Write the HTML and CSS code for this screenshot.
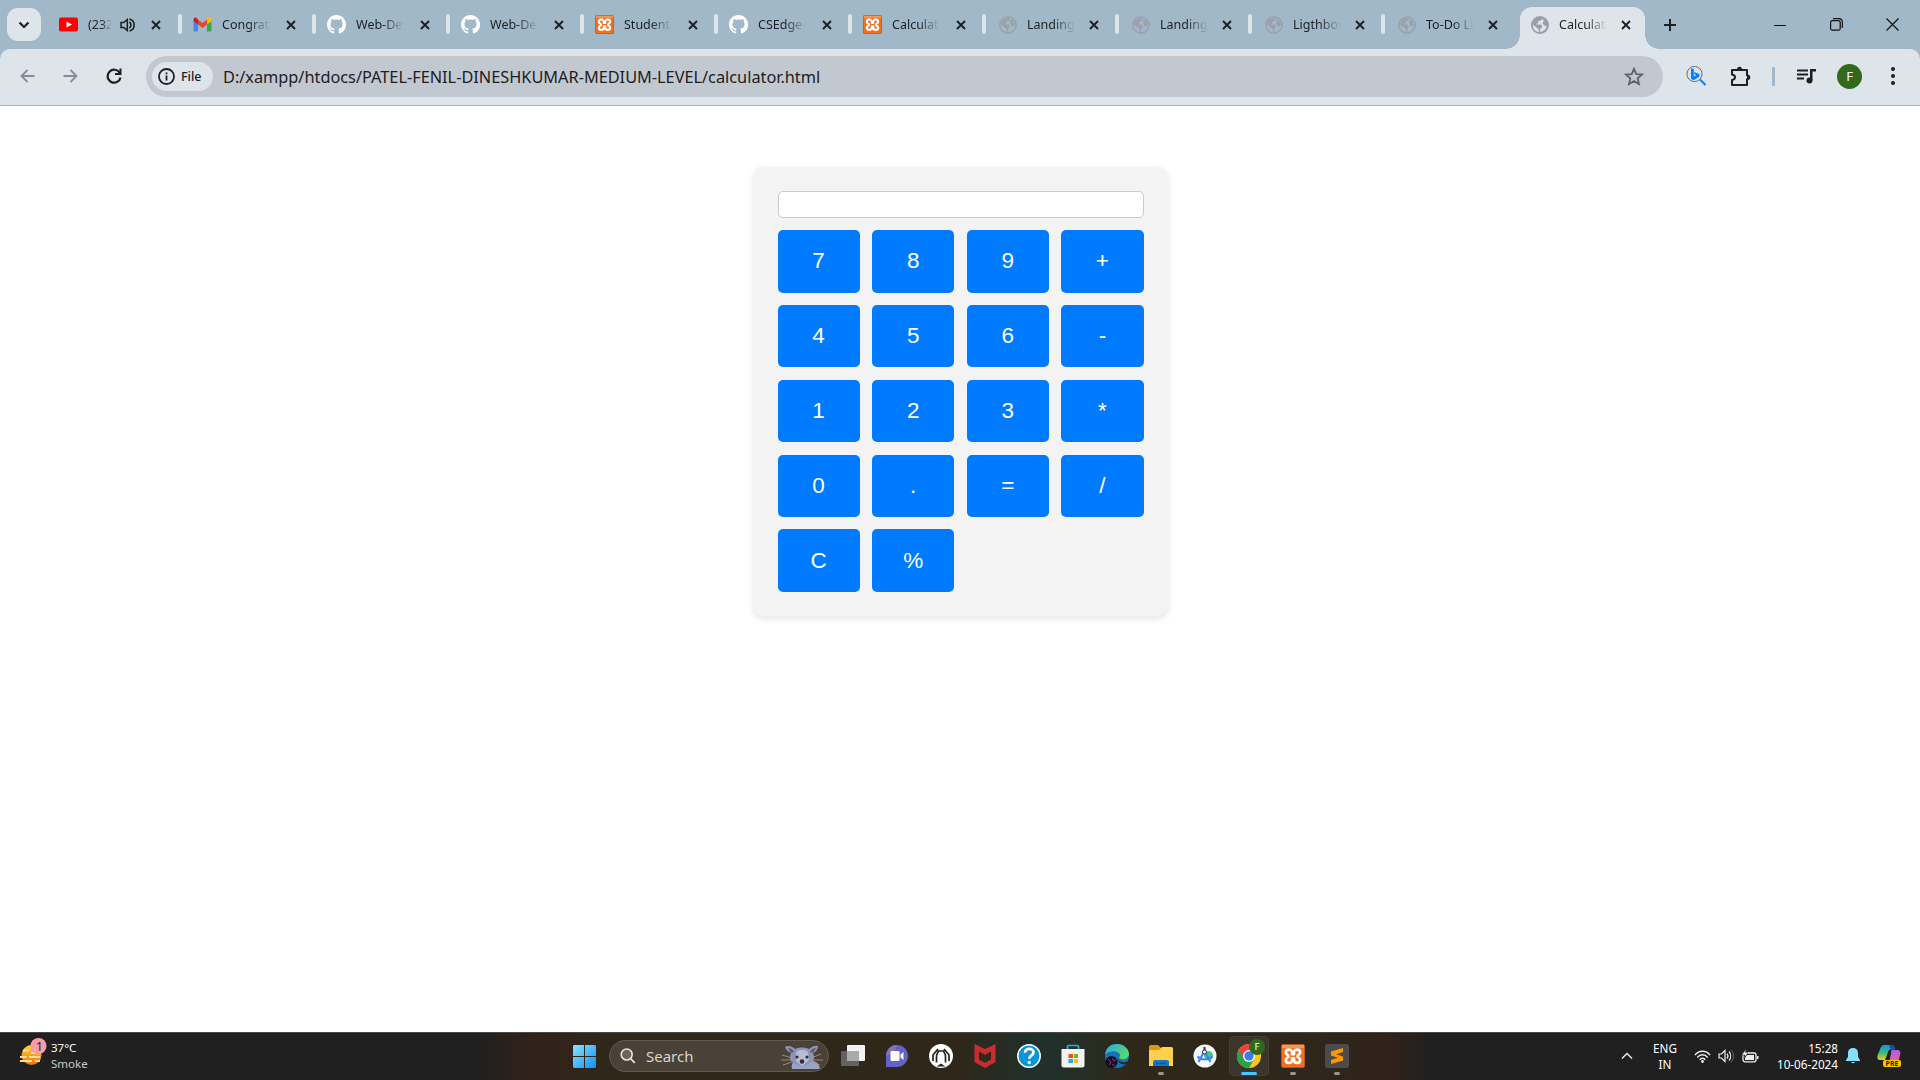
FILE: index.html
```html
<!DOCTYPE html>
<html lang="en">
<head>
<meta charset="utf-8">
<title>Calculator</title>
<link rel="stylesheet" href="styles.css">
</head>
<body>
<svg class="defs" aria-hidden="true">
  <defs>
    <symbol id="close" viewBox="0 0 10 10"><path d="M1 1 9 9M9 1 1 9" fill="none" stroke="#1c2023" stroke-width="1.9"/></symbol>
    <symbol id="github" viewBox="0 0 16 16"><path fill="#fff" d="M8 0C3.58 0 0 3.58 0 8c0 3.54 2.29 6.53 5.47 7.59.4.07.55-.17.55-.38 0-.19-.01-.82-.01-1.49-2.01.37-2.53-.49-2.69-.94-.09-.23-.48-.94-.82-1.13-.28-.15-.68-.52-.01-.53.63-.01 1.08.58 1.23.82.72 1.21 1.87.87 2.33.66.07-.52.28-.87.51-1.07-1.78-.2-3.64-.89-3.64-3.95 0-.87.31-1.59.82-2.15-.08-.2-.36-1.02.08-2.12 0 0 .67-.21 2.2.82.64-.18 1.32-.27 2-.27s1.36.09 2 .27c1.53-1.04 2.2-.82 2.2-.82.44 1.1.16 1.92.08 2.12.51.56.82 1.27.82 2.15 0 3.07-1.87 3.75-3.65 3.95.29.25.54.73.54 1.48 0 1.07-.01 1.93-.01 2.2 0 .21.15.46.55.38A8.01 8.01 0 0 0 16 8c0-4.42-3.58-8-8-8z"/></symbol>
    <symbol id="xampp" viewBox="0 0 24 24"><rect x=".5" y=".5" width="23" height="23" rx="1.5" fill="#f37021" stroke="#b5561c"/><path d="M1 1h22v3H1z" fill="#e39a66"/><path d="M11 8.500C11 4.500 4.800 4.800 4.800 8.500c0 2.200 2.700 2 2.700 3.700s-2.700 1.500-2.700 3.700c0 3.900 6.200 3.900 6.200 0v-1.700h2v1.700c0 3.900 6.200 3.900 6.200 0 0-2.200-2.700-2-2.700-3.700s2.700-1.500 2.700-3.700c0-3.700-6.200-4-6.200 0v1.700h-2z" fill="none" stroke="#fff" stroke-width="2.600" stroke-linejoin="round"/></symbol>
    <symbol id="globe" viewBox="0 0 18 18"><circle cx="9" cy="9" r="8.100" fill="none" stroke="#9b9fa8" stroke-width="1.500"/><path fill="#9b9fa8" d="M2.200 7.500C3 4.500 5.500 2.500 9 2.300l2 .4-1 2-2.800.5v2L5.200 8.500h4l1.800 1.700-1.700 2v3.300l-1.500.2v-2.500L5.500 11 2.300 8.800zM12.200 3.500c2 1 3.200 2.700 3.500 5l-1 1.700-2-.2-1.400-2.200.5-1.300-1-1.500z"/></symbol>
    <symbol id="globe-solid" viewBox="0 0 18 18"><circle cx="9" cy="9" r="9" fill="#9b9ea8"/><path d="M11.200 2.200c0 2.500-2 2.300-3.700 2.800-.8.700.2 1.800-.5 2.500H5c0 1.700 3.500.8 5 1.200 1.700.8 1.500 2.700 0 3.300-1.200.5-.5 2-1 3.900l-1-.1c-.3-1.700 0-2.300-1.300-3.300L2 8.700c-.5 4 2.500 7.200 6 7.300 4 0 7.300-2.800 7.900-6.500-1 1-2 .8-2.700-.2-.7-1-1.500-1.300-1.500-2.300s1-1 1-2-.8-1.300-1.500-2.800z" fill="#dde5eb"/></symbol>
  </defs>
</svg>

<header class="browser">
  <div class="tabstrip">
    <button class="tab-search"><svg width="12" height="8" viewBox="0 0 12 8"><path d="m1.500 1.500 4.500 4.500 4.500-4.500" fill="none" stroke="#1c2023" stroke-width="2.200"/></svg></button>
    <nav class="tabs">
      <div class="tab"><svg class="fav" viewBox="0 0 19 19"><rect y="2.500" width="19" height="14" rx="2" fill="#f00"/><path d="m7.500 6.500 5.500 3-5.500 3z" fill="#fff"/></svg><span class="label short">(232)</span><svg class="audio" viewBox="0 0 15 14"><path d="M1 4.500h2.800L7.300 1.500v11L3.800 9.500H1z" fill="none" stroke="#1c2023" stroke-width="1.500"/><path d="M9.300 4a3.500 3.500 0 0 1 0 6M9.500 1a6.200 6.200 0 0 1 0 12" fill="none" stroke="#1c2023" stroke-width="1.600"/></svg><svg class="x"><use href="#close"/></svg></div>
      <div class="tab"><svg class="fav" viewBox="0 0 19 19"><path d="M.5 5v10.500c0 .6.400 1 1 1H5V9z" fill="#4285f4"/><path d="M18.500 5v10.500c0 .6-.4 1-1 1H14V9z" fill="#34a853"/><path d="M14 4.500V9.500l4.500-3.300V4.500c0-2-2-2.500-3.200-1.500z" fill="#fbbc04"/><path d="M5 4.500v5l4.500 3.400L14 9.500v-5L9.500 8z" fill="#ea4335"/><path d="M.5 4.500v1.700L5 9.500v-5L3.700 3C2.500 2 .5 2.800.5 4.500z" fill="#c5221f"/></svg><span class="label">Congratulations</span><svg class="x"><use href="#close"/></svg></div>
      <div class="tab"><svg class="fav"><use href="#github"/></svg><span class="label">Web-Development</span><svg class="x"><use href="#close"/></svg></div>
      <div class="tab"><svg class="fav"><use href="#github"/></svg><span class="label">Web-Development</span><svg class="x"><use href="#close"/></svg></div>
      <div class="tab"><svg class="fav"><use href="#xampp"/></svg><span class="label">Student</span><svg class="x"><use href="#close"/></svg></div>
      <div class="tab"><svg class="fav"><use href="#github"/></svg><span class="label">CSEdge-Learn</span><svg class="x"><use href="#close"/></svg></div>
      <div class="tab"><svg class="fav"><use href="#xampp"/></svg><span class="label">Calculator</span><svg class="x"><use href="#close"/></svg></div>
      <div class="tab local"><svg class="fav"><use href="#globe"/></svg><span class="label">Landing Page</span><svg class="x"><use href="#close"/></svg></div>
      <div class="tab local"><svg class="fav"><use href="#globe"/></svg><span class="label">Landing Page</span><svg class="x"><use href="#close"/></svg></div>
      <div class="tab local"><svg class="fav"><use href="#globe"/></svg><span class="label">Ligthbox</span><svg class="x"><use href="#close"/></svg></div>
      <div class="tab local last"><svg class="fav"><use href="#globe"/></svg><span class="label">To-Do List</span><svg class="x"><use href="#close"/></svg></div>
      <div class="tab active"><svg class="fav"><use href="#globe-solid"/></svg><span class="label">Calculator</span><svg class="x"><use href="#close"/></svg></div>
    </nav>
    <svg class="new-tab" width="14" height="14" viewBox="0 0 14 14"><path d="M7 1v12M1 7h12" stroke="#1c2023" stroke-width="2"/></svg>
    <div class="window-controls">
      <svg width="12" height="12" viewBox="0 0 12 12"><path d="M0 6.500h12" stroke="#111"/></svg>
      <svg width="13" height="13" viewBox="0 0 13 13"><rect x=".6" y="2.600" width="9.600" height="9.600" rx="1.800" fill="none" stroke="#111" stroke-width="1.200"/><path d="M3 .6h6.300a3 3 0 0 1 3 3V10" fill="none" stroke="#111" stroke-width="1.200"/></svg>
      <svg width="13" height="13" viewBox="0 0 13 13"><path d="m.5.5 12 12m0-12-12 12" stroke="#111" stroke-width="1.200"/></svg>
    </div>
  </div>
  <div class="toolbar">
    <div class="nav-icons">
      <svg width="15" height="14" viewBox="0 0 15 14"><path d="M14.500 7H1.500M7.500 1l-6 6 6 6" fill="none" stroke="#868d94" stroke-width="1.800"/></svg>
      <svg width="15" height="14" viewBox="0 0 15 14"><path d="M.5 7h13M7.500 1l6 6-6 6" fill="none" stroke="#868d94" stroke-width="1.800"/></svg>
      <svg width="16" height="16" viewBox="0 0 16 16"><path d="M13.800 5A6.500 6.500 0 1 0 14.500 9.500" fill="none" stroke="#1c2023" stroke-width="2.200"/><path d="M15.500.5v6.500H9V5h4.500V.5z" fill="#1c2023"/></svg>
    </div>
    <div class="omnibox">
      <div class="chip"><svg width="17" height="17" viewBox="0 0 17 17"><circle cx="8.500" cy="8.500" r="7.500" fill="none" stroke="#1c2023" stroke-width="1.800"/><path d="M8.500 7.500V12.500M8.500 4.500v1.800" stroke="#1c2023" stroke-width="1.800"/></svg><span>File</span></div>
      <span class="url">D:/xampp/htdocs/PATEL-FENIL-DINESHKUMAR-MEDIUM-LEVEL/calculator.html</span>
      <svg class="star" width="20" height="19" viewBox="0 0 20 19"><path d="m10 1.800 2.300 5.300 5.700.5-4.300 3.800 1.300 5.700-5-3-5 3 1.300-5.700L2 7.600l5.700-.5z" fill="none" stroke="#5f6368" stroke-width="1.800"/></svg>
    </div>
    <div class="actions">
      <svg class="bing" width="21" height="20" viewBox="0 0 21 20"><circle cx="8.500" cy="8" r="7.600" fill="none" stroke="#5f6b75"/><path d="m14 13.500 5.500 5.500" stroke="#0a7cff" stroke-width="2"/><path d="m5 2.200 2.800.9v7.500l2.400-1.300-1.400-.7-1-2.500 5.500 2v2.700L7.500 14.200 5 12.700z" fill="#0a7cff"/></svg>
      <svg class="puzzle" width="21" height="21" viewBox="0 0 21 21"><path d="M2 4h15v5.200c3 .5 3 3.600 0 4V19H2v-5c4-.8 4-4.800 0-5.500z" fill="none" stroke="#1c2023" stroke-width="2" stroke-linejoin="round"/><path d="M7 4a2.500 3.200 0 0 1 5 0zM17 9a2.800 2.300 0 0 1 0 5z" fill="#1c2023"/></svg>
      <i class="divider"></i>
      <svg class="media" width="19" height="15" viewBox="0 0 19 15"><path d="M0 1.500h11M0 5.500h11M0 9.500h7" stroke="#1c2023" stroke-width="1.900"/><path d="M13 0h6v2.500h-3.500V11H13z" fill="#1c2023"/><circle cx="12.500" cy="11.500" r="3" fill="#1c2023"/></svg>
      <span class="avatar">F</span>
      <svg class="menu" width="4" height="18" viewBox="0 0 4 18"><g fill="#1c2023"><circle cx="2" cy="2" r="2"/><circle cx="2" cy="9" r="2"/><circle cx="2" cy="16" r="2"/></g></svg>
    </div>
  </div>
</header>

<main class="page">
  <section class="calculator">
    <input class="display" type="text" readonly>
    <div class="keys">
      <button>7</button><button>8</button><button>9</button><button>+</button>
      <button>4</button><button>5</button><button>6</button><button>-</button>
      <button>1</button><button>2</button><button>3</button><button>*</button>
      <button>0</button><button>.</button><button>=</button><button>/</button>
      <button>C</button><button>%</button>
    </div>
  </section>
</main>

<footer class="taskbar">
  <div class="weather">
    <svg width="28" height="28" viewBox="0 0 28 28"><defs><linearGradient id="sun" x2="0" y2="1"><stop stop-color="#ffd42c"/><stop offset="1" stop-color="#f0720c"/></linearGradient></defs><circle cx="12.500" cy="17" r="10" fill="url(#sun)"/><path d="M4 12.500h6M1 19h7m2 0h11M1 23h12m3 0h5M12 15h6" stroke="#f7dc9c" stroke-width="1.800"/><circle cx="19.500" cy="8" r="8" fill="#fb9ba6"/><text x="17" y="12.500" font-family="Noto Sans, sans-serif" font-size="12" fill="#222">1</text></svg>
    <div class="weather-text"><span>37°C</span><span class="dim">Smoke</span></div>
  </div>
  <div class="apps">
    <svg class="start" viewBox="0 0 23 23"><defs><linearGradient id="win" x2="1" y2="1"><stop stop-color="#8ae2ff"/><stop offset="1" stop-color="#0a93f5"/></linearGradient></defs><path d="M1 0h10v11H0V1zM12 0h10l1 1v10H12zM0 12h11v11H1l-1-1zM12 12h11v10l-1 1H12z" fill="url(#win)"/></svg>
    <div class="search">
      <svg width="16" height="16" viewBox="0 0 16 16"><circle cx="6.700" cy="6.500" r="5.500" fill="#6b6459" stroke="#e5e3e0" stroke-width="1.600"/><path d="m10.800 10.800 4 4" stroke="#e5e3e0" stroke-width="1.800"/></svg>
      <span>Search</span>
      <svg class="critter" width="42" height="24" viewBox="0 0 42 24"><path d="M11 24c-1-5 1-8 5-9l12 0c5 1 9 2 10 6 1 1 1 2 0 3z" fill="#98a2ca"/><path d="M4 2c3-2 7-1 10 2 4-2 10-2 14 0 3-3 7-4 9-3 0 3-2 6-5 7 3 6 0 9-5 11-3 2-9 2-12 0-6-2-7-6-5-11-3-1-5-3-6-6z" fill="#8a94b8"/><path d="M7 3c3 0 5 2 6 4l-3 1zM35 3c-3 0-5 2-6 4l3 1z" fill="#6a5863"/><path d="M15 7c4-3 9-3 12 0l1 8-7 6-6-5z" fill="#b6bdd5"/><circle cx="16" cy="12" r="1.600" fill="#2d3037"/><circle cx="26" cy="12" r="1.600" fill="#2d3037"/><ellipse cx="21" cy="16.500" rx="2.300" ry="2.300" fill="#342f37"/><path d="m11 13-10-3m10 5H0m11 2-9 3M30 13l10-4M30 15h12m-12 2 9 3" stroke="#b29883" stroke-width=".8"/></svg>
    </div>
    <div class="app"><svg viewBox="0 0 24 24"><rect x="6" y="1" width="18" height="16" rx="1" fill="#f2f2f2"/><rect y="7" width="18" height="15" rx="1" fill="#626262"/><path d="M6 7h12v10H6z" fill="#aaa"/></svg></div>
    <div class="app"><svg viewBox="0 0 24 24"><path d="M12 1a11 11 0 1 1 0 22H1V12A11 11 0 0 1 12 1z" fill="#6462c5"/><path d="M1 12A11 11 0 0 1 12 1l-2 6z" fill="#8770bb"/><rect x="5.500" y="7" width="9" height="10" rx="1.300" fill="#fff"/><path d="m15.500 10.500 3-2.500v8l-3-2.500z" fill="#fff"/></svg></div>
    <div class="app"><svg viewBox="0 0 24 24"><circle cx="12" cy="12" r="12" fill="#fff"/><path d="M4 17v-6l5-6M20 17v-6l-5-6M7.500 18.500v-7L9.500 7h5l2 4.500v7" fill="none" stroke="#25221d" stroke-width="1.700"/><path d="M7.500 22.500 12 19.500l4.500 3z" fill="#25221d"/></svg></div>
    <div class="app"><svg viewBox="0 0 24 24"><path d="m1.500 0 10.500 5L22.500 0v18L12 24 1.500 18z" fill="#c52d30"/><path d="M6 7.500 12 11l6-3.500v8.300l-6 3-6-3z" fill="#30291b"/></svg></div>
    <div class="app"><svg viewBox="0 0 24 24"><circle cx="12" cy="12" r="11.200" fill="#0996d8" stroke="#fff" stroke-width="1.500"/><path d="M8 8.700c0-5 8.500-5 8.500-.3 0 3-4.200 3-4.200 6.300" fill="none" stroke="#fff" stroke-width="2.700"/><circle cx="12.200" cy="18.500" r="1.700" fill="#fff"/></svg></div>
    <div class="app"><svg viewBox="0 0 24 24"><path d="M6.500 6V2.500a1 1 0 0 1 1-1h9a1 1 0 0 1 1 1V6" fill="none" stroke="#2ba9e9" stroke-width="1.700"/><path d="M.5 5h23v16.500c0 1-1 2-2 2h-19c-1 0-2-1-2-2z" fill="#f3f3f3"/><path d="M7.500 10H12v4H7.500z" fill="#f04b23"/><path d="M13 10h4v4h-4z" fill="#7eb900"/><path d="M7.500 15H12v4H7.500z" fill="#26a4ec"/><path d="M13 15h4v4h-4z" fill="#ffb902"/></svg></div>
    <div class="app"><svg viewBox="0 0 24 24"><defs><linearGradient id="edge" x2="1" y2=".5"><stop stop-color="#28a9ea"/><stop offset="1" stop-color="#56d86a"/></linearGradient></defs><circle cx="12" cy="12" r="12" fill="#1672bb"/><path d="M0 11C1 3 6 0 12 0c7 0 12 5 12 10 0 4-4 6-8 5-3-1-1-2-1-4C15 7 4 5 0 11z" fill="url(#edge)"/><path d="M12.500 12.500c-1 4 4 7 10 5 1-.5 1 1 0 2l-3 1c-5 0-8-4-7-8z" fill="#30261a"/><circle cx="6.500" cy="18" r="6" fill="#150d1d"/><path d="m3 15 3 3-2 3m3-7 2 3 2-1m-4 4 3 2" stroke="#92358d" fill="none"/></svg></div>
    <div class="app running"><svg viewBox="0 0 24 24"><path d="M0 3q0-2 2-2h7l3 3h11v6H0z" fill="#d99a10"/><path d="M0 6h10l3-3h9.500q1.500 0 1.500 1.500V22H0z" fill="#ffd04c"/><path d="M4 22v-4q0-2 2-2h12q2 0 2 2v4z" fill="#1576c6"/><path d="M7 19.500h10" stroke="#0b559c" stroke-width="1.500"/></svg></div>
    <div class="app"><svg viewBox="0 0 24 24"><circle cx="12" cy="12" r="11.500" fill="#f7f8f9"/><circle cx="15.500" cy="11.500" r="4.500" fill="#49c683"/><path d="m5.500 18 6-11 6 11M4.500 12.500c4 4 11 4 15 0" fill="none" stroke="#4285ea" stroke-width="2.200"/><path d="M11.500 3v4" stroke="#21324a" stroke-width="2"/><circle cx="11.500" cy="8" r="2" fill="#fff" stroke="#21324a"/></svg></div>
    <div class="app running current">
      <svg viewBox="0 0 24 24"><circle cx="12" cy="12" r="12" fill="#fcc919"/><path d="M1.600 6A12 12 0 0 0 12 24l5.200-9-5.200-3z" fill="#28a34c"/><path d="M12 6h10.400a12 12 0 0 0-20.800 0l5.200 9z" fill="#e8453c"/><circle cx="12" cy="12" r="6" fill="#fff"/><circle cx="12" cy="12" r="4.700" fill="#3b7eea"/></svg>
      <span class="profile">F</span>
    </div>
    <div class="app running"><svg viewBox="0 0 24 24"><use href="#xampp"/></svg></div>
    <div class="app running"><svg viewBox="0 0 24 24"><rect width="24" height="24" rx="2" fill="#4b4b4b"/><path d="M18 4v4l-7 2.300 7 2.200v4L6 20v-4l7-2.200-7-2.300v-4z" fill="#ff9800"/></svg></div>
  </div>
  <div class="tray">
    <svg class="chev" width="12" height="8" viewBox="0 0 12 8"><path d="m1 6.500 5-5 5 5" fill="none" stroke="#eee" stroke-width="1.400"/></svg>
    <div class="lang"><span>ENG</span><span>IN</span></div>
    <svg class="wifi" width="17" height="13" viewBox="0 0 17 13"><path d="M1 5c4-5 11-5 15 0M3.300 7.500c3-3.600 7.500-3.600 10.400 0M5.700 9.700c1.600-2 4-2 5.600 0" fill="none" stroke="#eee" stroke-width="1.400"/><circle cx="8.500" cy="11.500" r="1.400" fill="#eee"/></svg>
    <svg class="volume" width="17" height="14" viewBox="0 0 17 14"><path d="M1 5h2.500L7 1.500v11L3.500 9H1z" fill="none" stroke="#eee" stroke-width="1.200"/><path d="M9 4.500a4 4 0 0 1 0 5M11 2.500a7 7 0 0 1 0 9" fill="none" stroke="#eee" stroke-width="1.200"/><path d="M13.300 1a9 9 0 0 1 0 12" fill="none" stroke="#666"/></svg>
    <svg class="battery" width="17" height="14" viewBox="0 0 17 14"><rect x="1" y="4" width="13" height="8.800" rx="2" fill="none" stroke="#eee" stroke-width="1.300"/><path d="M5 6h7v5H3V9z" fill="#eee"/><path d="M15 7h1.500v3H15z" fill="#eee"/><path d="M4 0 0 6h3L2 9l4-5H3.500z" fill="#fff" stroke="#202020" stroke-width=".5"/></svg>
    <div class="clock"><span>15:28</span><span>10-06-2024</span></div>
    <svg class="bell" width="14" height="16" viewBox="0 0 14 16"><path d="M7 0c3.500 0 5 2.500 5 5v4l2 3v1H0v-1l2-3V5c0-2.500 1.500-5 5-5zM5 14h4q-2 2.500-4 0z" fill="#86dfff"/></svg>
    <div class="copilot">
      <svg width="24" height="18" viewBox="0 0 24 18"><defs><linearGradient id="cpa" x2="0" y2="1"><stop stop-color="#1596e9"/><stop offset=".5" stop-color="#37b77b"/><stop offset="1" stop-color="#efcb25"/></linearGradient><linearGradient id="cpb" x2="0" y2="1"><stop stop-color="#a65cf0"/><stop offset="1" stop-color="#f2648e"/></linearGradient></defs><path d="M7 0h8c2 0 2 2 3 4h-4c-2 0-3 2-4 6l-2 5H3c-3 0-3-3-2-6l3-7q1-2 3-2z" fill="url(#cpa)"/><path d="M12 0h3c2 0 2 2 3 5h-4z" fill="#1749b8"/><path d="M15 5h5c3 0 4 2 3 5l-2 8h-9l2-9q0-4 1-4z" fill="url(#cpb)"/></svg>
      <b class="pre">PRE</b>
    </div>
  </div>
</footer>
</body>
</html>
```
FILE: styles.css
```css
* { box-sizing: border-box; }
body {
  margin: 0;
  height: 1080px;
  display: flex;
  flex-direction: column;
  overflow: hidden;
  background: #fff;
  font-family: "Noto Sans", "Open Sans", sans-serif;
  color: #1c2023;
}
svg { display: block; flex: none; }
.defs { position: absolute; width: 0; height: 0; }
button { border: 0; padding: 0; }

/* Browser frame */
.browser { flex: none; height: 106px; background: #a0b8c8; }
.tabstrip { height: 49px; display: flex; align-items: center; }
.tab-search {
  flex: none;
  width: 34px; height: 33px;
  margin-left: 7px;
  border-radius: 11px;
  background: #dde5eb;
  display: grid; place-items: center;
}
.tabs { display: flex; align-self: stretch; margin-left: 5px; }
.tab {
  position: relative;
  width: 134px;
  padding-left: 13px;
  display: flex;
  align-items: center;
}
.tab::after {
  content: "";
  position: absolute;
  right: -2px; top: 14px;
  width: 4px; height: 20px;
  border-radius: 2px;
  background: #dde5eb;
}
.fav { width: 19px; height: 19px; }
.label {
  width: 48px;
  margin-left: 10px;
  overflow: hidden;
  white-space: nowrap;
  font-size: 12.500px;
  line-height: 20px;
  -webkit-mask-image: linear-gradient(90deg, #000 55%, transparent 100%);
  mask-image: linear-gradient(90deg, #000 55%, transparent 100%);
}
.label.short { width: 24px; }
.audio { width: 15px; height: 14px; margin-left: 8px; }
.x { width: 10px; height: 10px; margin-left: 16px; }
.label.short ~ .x { margin-left: 16px; }
.tab.local { width: 133px; padding-left: 15px; }
.tab.local .fav, .tab.active .fav { width: 18px; height: 18px; margin-top: 1px; }
.tab.local .x { margin-left: 14px; }
.tab.last::after { display: none; }
.tab.local.last { width: 137px; }
.tab.active {
  width: 125px;
  height: 42px;
  margin-top: 7px;
  padding: 0 0 7px 11px;
  border-radius: 12px 12px 0 0;
  background: #dde5eb;
}
.tab.active .x { margin-left: 14px; }
.tab.active::before, .tab.active::after {
  content: "";
  position: absolute;
  top: auto; bottom: 0;
  width: 14px; height: 14px;
  border-radius: 0;
}
.tab.active::before { left: -14px; background: radial-gradient(circle at 0 0, transparent 13.500px, #dde5eb 14px); }
.tab.active::after { right: -14px; background: radial-gradient(circle at 100% 0, transparent 13.500px, #dde5eb 14px); }
.new-tab { margin-left: 18px; }
.window-controls { margin-left: auto; margin-right: 21px; display: flex; align-items: center; gap: 43.500px; }

.toolbar {
  height: 57px;
  display: flex;
  align-items: center;
  padding-bottom: 2px;
  border-bottom: 1px solid #b1b5b9;
  border-radius: 10px 10px 0 0;
  background: #dde5eb;
}
.nav-icons { width: 146px; padding-left: 20px; display: flex; align-items: center; gap: 28px; }
.omnibox {
  width: 1517px; height: 41px;
  display: flex; align-items: center;
  padding: 0 19px 0 6px;
  border-radius: 21px;
  background: #c2c8cf;
}
.chip {
  width: 61px; height: 29px;
  padding-left: 6px;
  display: flex; align-items: center; gap: 6px;
  border-radius: 15px;
  background: #dde5eb;
  font-size: 12.500px;
  font-weight: 500;
}
.url { margin: 1px 0 0 10px; font-size: 16.310px; line-height: 24px; white-space: nowrap; }
.star { margin-left: auto; }
.actions { flex: 1; display: flex; align-items: center; }
.bing { margin-left: 23px; }
.puzzle { margin-left: 23px; }
.divider { width: 3px; height: 19px; margin-left: 21px; border-radius: 1px; background: #a0b8c8; }
.media { margin-left: 22px; }
.avatar {
  width: 25px; height: 25px;
  margin-left: 21px;
  border-radius: 50%;
  background: #31691d;
  color: #fff;
  font-size: 13px;
  line-height: 25px;
  text-align: center;
}
.menu { margin-left: 29px; }

/* Calculator */
.page { flex: 1; padding-top: 61px; }
.calculator {
  width: 415px; height: 449px;
  margin: 0 auto;
  padding: 24px 24px 25px 25px;
  border-radius: 10px;
  background: #f3f3f3;
  box-shadow: 0 2.500px 6px rgba(0, 0, 0, .1);
}
.display {
  display: block;
  width: 100%; height: 27px;
  margin: 0 0 12.200px;
  border: 1px solid #ccc;
  border-radius: 5px;
  background: #fff;
  outline: 0;
}
.keys {
  display: grid;
  grid-template-columns: repeat(4, 1fr);
  grid-auto-rows: 62.400px;
  gap: 12.400px;
}
.keys button {
  border-radius: 5px;
  background: #007bff;
  color: #fff;
  font: 22.500px "Liberation Sans", Arial, sans-serif;
}

/* Taskbar */
.taskbar {
  flex: none;
  height: 48px;
  display: grid;
  grid-template-columns: 573px 1fr auto;
  align-items: center;
  border-top: 1px solid #4a4846;
  background: linear-gradient(90deg, #202020 480px, #33221a 540px, #2e271a 600px, #2e271a 960px, #20302b 1035px, #22302a 1060px, #2f281a 1130px, #2e261a 1340px, #33221a 1385px, #202020 1430px);
  color: #fff;
}
.weather { display: flex; align-items: center; padding: 0 0 2px 19px; gap: 4px; }
.weather svg { margin-top: -7px; }
.weather-text { display: flex; flex-direction: column; font-size: 11.500px; line-height: 16px; }
.weather-text .dim { color: #c8c8c8; }
.apps { display: flex; align-items: center; height: 47px; padding-bottom: 1px; }
.start { width: 23px; height: 23px; }
.search {
  width: 220px; height: 32px;
  margin: 0 4px 0 13px;
  padding: 0 5px 0 10px;
  display: flex; align-items: center;
  border: 1px solid #625a4e;
  border-radius: 16px;
  background: #4a4237;
  color: #d8d5d1;
  font-size: 15px;
}
.search span { margin-left: 10px; }
.critter { margin-left: auto; align-self: flex-end; margin-bottom: 2px; }
.app {
  position: relative;
  width: 40px; height: 40px;
  margin-right: 4px;
  display: grid;
  place-items: center;
  border-radius: 5px;
}
.app svg { width: 24px; height: 24px; }
.app.running::after {
  content: "";
  position: absolute;
  left: 17px; bottom: 1px;
  width: 6px; height: 3px;
  border-radius: 2px;
  background: #9c9891;
}
.app.current { background: #3c352b; box-shadow: inset 0 0 0 1px #463f35; }
.app.current::after { left: 12px; width: 16px; background: #4cc2ff; }
.profile {
  position: absolute;
  left: 20px; top: 3px;
  width: 16px; height: 16px;
  border-radius: 50%;
  background: #31691d;
  font-size: 9.500px;
  line-height: 16px;
  text-align: center;
}
.tray { display: flex; align-items: center; padding: 0 19px 1px 0; font-size: 11.700px; line-height: 16px; }
.lang { width: 30px; margin-left: 17px; display: flex; flex-direction: column; align-items: center; }
.wifi { margin-left: 14px; }
.volume { margin-left: 7px; }
.battery { margin-left: 7px; }
.clock { width: 72px; margin-left: 7px; display: flex; flex-direction: column; align-items: flex-end; white-space: nowrap; }
.bell { margin-left: 8px; }
.copilot { margin-left: 17px; width: 24px; display: flex; flex-direction: column; align-items: flex-end; }
.pre {
  width: 18px; height: 7px;
  margin-top: -3px;
  border-radius: 2px;
  background: #ffc400;
  color: #231f10;
  font-size: 7px;
  line-height: 7px;
  text-align: center;
}
```
